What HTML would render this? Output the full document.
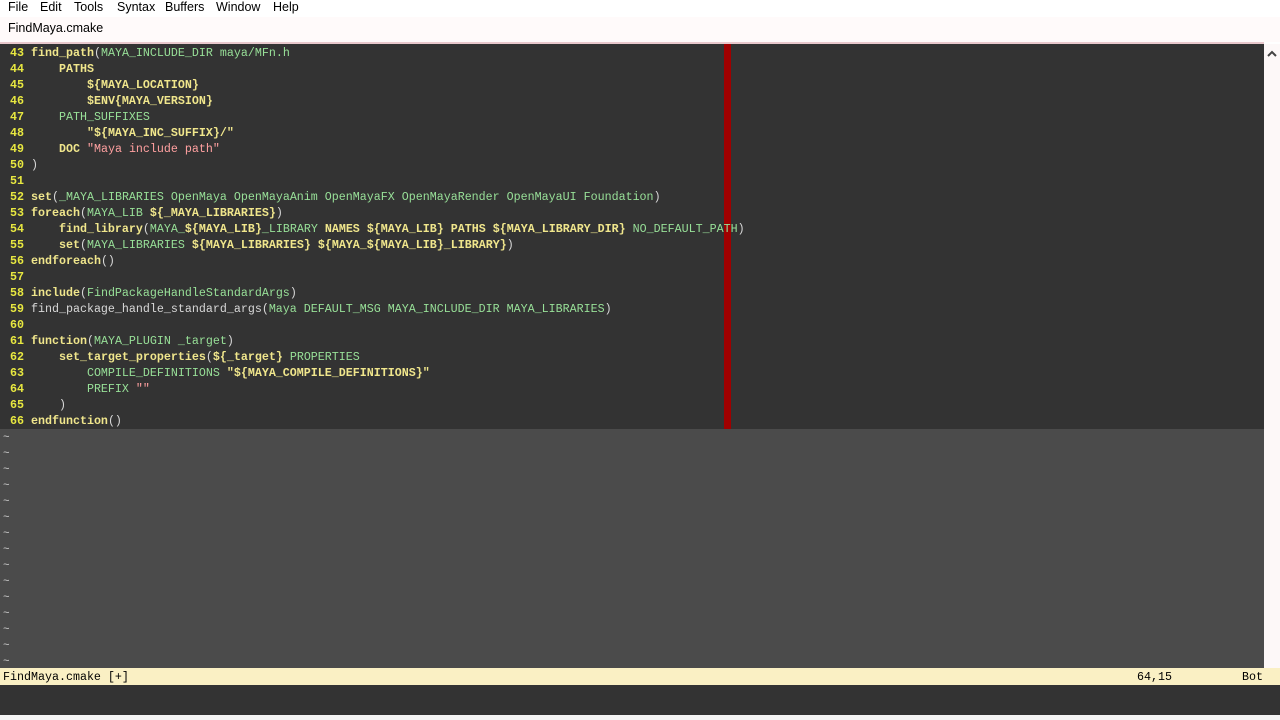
<!DOCTYPE html>
<html><head><style>
body{margin:0;width:1280px;height:720px;overflow:hidden;background:#fff;font-family:"Liberation Sans",sans-serif;position:relative}
.menu{position:absolute;top:0;left:0;width:1280px;height:17px;font-size:12.5px;color:#000}
.menu span{position:absolute;top:0}
.tab{position:absolute;top:17px;left:0;width:1280px;height:25px;background:#fffafa;font-size:12.5px}
.tab span{position:absolute;left:8px;top:4px}
.pinkline{position:absolute;top:42px;left:0;width:1264px;height:2px;background:#e8c8cc}
.ed{position:absolute;top:44px;left:0;width:1264px;height:385px;background:#333}
.tl{position:absolute;top:429px;left:0;width:1264px;height:239px;background:#4b4b4b}
.sb{position:absolute;top:44px;left:1264px;width:16px;height:624px;background:#fdf8f8}
.cc{position:absolute;top:44px;left:724px;width:7px;height:385px;background:#a00000}
.code{position:absolute;top:45px;left:3px;font-family:"Liberation Mono",monospace;font-size:11.67px;line-height:16px;white-space:pre;color:#98e098}
.n{color:#e8e840;font-weight:bold}
.k{color:#f0e68c;font-weight:bold}
.v{color:#f0e68c;font-weight:bold}
.p{color:#d8d8d8}
.s{color:#ffa0a0}
.t{position:absolute;left:3px;font-family:"Liberation Mono",monospace;font-size:11px;color:#ccc;line-height:16px}
.st{position:absolute;top:668px;left:0;width:1280px;height:17px;background:#faf0c4;font-family:"Liberation Mono",monospace;font-size:11.67px;line-height:17px;color:#000;white-space:pre}
.st span{position:absolute;top:1px}
.cmd{position:absolute;top:685px;left:0;width:1280px;height:30px;background:#333}
.bot{position:absolute;top:715px;left:0;width:1280px;height:5px;background:#f4f4f4}
</style></head><body>
<div class="menu"><span style="left:8px">File</span><span style="left:40px">Edit</span><span style="left:74px">Tools</span><span style="left:117px">Syntax</span><span style="left:165px">Buffers</span><span style="left:216px">Window</span><span style="left:273px">Help</span></div>
<div class="tab"><span>FindMaya.cmake</span></div>
<div class="pinkline"></div>
<div class="ed"></div>
<div class="tl"></div>
<div class="sb"><svg width="16" height="16" style="position:absolute;top:2px;left:0"><path d="M4 10 L8 6 L12 10" stroke="#444" stroke-width="2" fill="none"/></svg></div>
<div class="cc"></div>
<div class="code"><span class="n"> 43 </span><span class="k">find_path</span><span class="p">(</span>MAYA_INCLUDE_DIR maya/MFn.h
<span class="n"> 44 </span>    <span class="k">PATHS</span>
<span class="n"> 45 </span>        <span class="v">${MAYA_LOCATION}</span>
<span class="n"> 46 </span>        <span class="v">$ENV{MAYA_VERSION}</span>
<span class="n"> 47 </span>    PATH_SUFFIXES
<span class="n"> 48 </span>        <span class="v">"${MAYA_INC_SUFFIX}/"</span>
<span class="n"> 49 </span>    <span class="k">DOC</span> <span class="s">"Maya include path"</span>
<span class="n"> 50 </span><span class="p">)</span>
<span class="n"> 51 </span>
<span class="n"> 52 </span><span class="k">set</span><span class="p">(</span>_MAYA_LIBRARIES OpenMaya OpenMayaAnim OpenMayaFX OpenMayaRender OpenMayaUI Foundation<span class="p">)</span>
<span class="n"> 53 </span><span class="k">foreach</span><span class="p">(</span>MAYA_LIB <span class="v">${_MAYA_LIBRARIES}</span><span class="p">)</span>
<span class="n"> 54 </span>    <span class="k">find_library</span><span class="p">(</span>MAYA_<span class="v">${MAYA_LIB}</span>_LIBRARY <span class="k">NAMES</span> <span class="v">${MAYA_LIB}</span> <span class="k">PATHS</span> <span class="v">${MAYA_LIBRARY_DIR}</span> NO_DEFAULT_PATH<span class="p">)</span>
<span class="n"> 55 </span>    <span class="k">set</span><span class="p">(</span>MAYA_LIBRARIES <span class="v">${MAYA_LIBRARIES}</span> <span class="v">${MAYA_${MAYA_LIB}_LIBRARY}</span><span class="p">)</span>
<span class="n"> 56 </span><span class="k">endforeach</span><span class="p">()</span>
<span class="n"> 57 </span>
<span class="n"> 58 </span><span class="k">include</span><span class="p">(</span>FindPackageHandleStandardArgs<span class="p">)</span>
<span class="n"> 59 </span><span class="p">find_package_handle_standard_args(</span>Maya DEFAULT_MSG MAYA_INCLUDE_DIR MAYA_LIBRARIES<span class="p">)</span>
<span class="n"> 60 </span>
<span class="n"> 61 </span><span class="k">function</span><span class="p">(</span>MAYA_PLUGIN _target<span class="p">)</span>
<span class="n"> 62 </span>    <span class="k">set_target_properties</span><span class="p">(</span><span class="v">${_target}</span> PROPERTIES
<span class="n"> 63 </span>        COMPILE_DEFINITIONS <span class="v">"${MAYA_COMPILE_DEFINITIONS}"</span>
<span class="n"> 64 </span>        PREFIX <span class="s">""</span>
<span class="n"> 65 </span>    <span class="p">)</span>
<span class="n"> 66 </span><span class="k">endfunction</span><span class="p">()</span></div>
<div class="t" style="top:430px">~<br>~<br>~<br>~<br>~<br>~<br>~<br>~<br>~<br>~<br>~<br>~<br>~<br>~<br>~</div>
<div class="st"><span style="left:3px">FindMaya.cmake [+]</span><span style="left:1137px">64,15</span><span style="left:1242px">Bot</span></div>
<div class="cmd"></div>
<div class="bot"></div>
</body></html>
